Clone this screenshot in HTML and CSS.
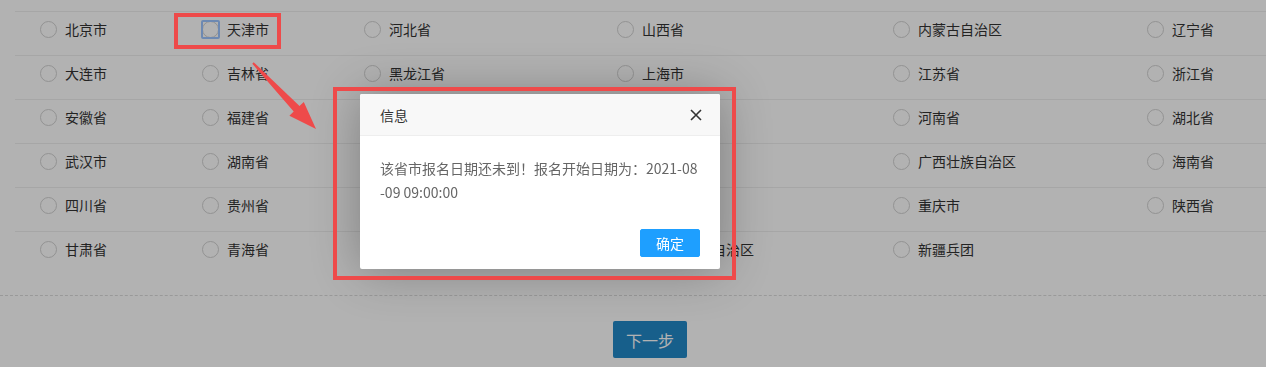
FILE: index.html
```html
<!DOCTYPE html>
<html lang="zh-CN">

<head>
    <meta charset="UTF-8">
    <meta name="viewport" content="width=device-width, initial-scale=1.0">
    <title>选择报名省市</title>
    <link rel="stylesheet" href="styles.css">
</head>

<body>
    <div class="page">
        <div class="area-table">
            <div class="area-row">
                <label class="area-item"><span class="radio"></span>北京市</label>
                <label class="area-item"><span class="radio focused"></span>天津市</label>
                <label class="area-item"><span class="radio"></span>河北省</label>
                <label class="area-item"><span class="radio"></span>山西省</label>
                <label class="area-item"><span class="radio"></span>内蒙古自治区</label>
                <label class="area-item"><span class="radio"></span>辽宁省</label>
            </div>
            <div class="area-row">
                <label class="area-item"><span class="radio"></span>大连市</label>
                <label class="area-item"><span class="radio"></span>吉林省</label>
                <label class="area-item"><span class="radio"></span>黑龙江省</label>
                <label class="area-item"><span class="radio"></span>上海市</label>
                <label class="area-item"><span class="radio"></span>江苏省</label>
                <label class="area-item"><span class="radio"></span>浙江省</label>
            </div>
            <div class="area-row">
                <label class="area-item"><span class="radio"></span>安徽省</label>
                <label class="area-item"><span class="radio"></span>福建省</label>
                <label class="area-item"><span class="radio"></span>江西省</label>
                <label class="area-item"><span class="radio"></span>山东省</label>
                <label class="area-item"><span class="radio"></span>河南省</label>
                <label class="area-item"><span class="radio"></span>湖北省</label>
            </div>
            <div class="area-row">
                <label class="area-item"><span class="radio"></span>武汉市</label>
                <label class="area-item"><span class="radio"></span>湖南省</label>
                <label class="area-item"><span class="radio"></span>广东省</label>
                <label class="area-item"><span class="radio"></span>深圳市</label>
                <label class="area-item"><span class="radio"></span>广西壮族自治区</label>
                <label class="area-item"><span class="radio"></span>海南省</label>
            </div>
            <div class="area-row">
                <label class="area-item"><span class="radio"></span>四川省</label>
                <label class="area-item"><span class="radio"></span>贵州省</label>
                <label class="area-item"><span class="radio"></span>云南省</label>
                <label class="area-item"><span class="radio"></span>西藏自治区</label>
                <label class="area-item"><span class="radio"></span>重庆市</label>
                <label class="area-item"><span class="radio"></span>陕西省</label>
            </div>
            <div class="area-row">
                <label class="area-item"><span class="radio"></span>甘肃省</label>
                <label class="area-item"><span class="radio"></span>青海省</label>
                <label class="area-item"><span class="radio"></span>宁夏回族自治区</label>
                <label class="area-item"><span class="radio"></span>新疆维吾尔自治区</label>
                <label class="area-item"><span class="radio"></span>新疆兵团</label>
            </div>
        </div>

        <div class="divider"></div>

        <div class="footer">
            <button class="btn-next" type="button">下一步</button>
        </div>
    </div>

    <!-- layer shade + dialog -->
    <div class="shade"></div>

    <div class="layer">
        <div class="layer-title">
            <span>信息</span>
            <svg class="layer-close" width="12" height="12" viewBox="0 0 12 12">
                <path d="M1 1L11 11M11 1L1 11" stroke="#333" stroke-width="1.6" fill="none" />
            </svg>
        </div>
        <div class="layer-content">该省市报名日期还未到！报名开始日期为：2021-08-09 09:00:00</div>
        <div class="layer-btn">
            <a class="layer-btn-ok">确定</a>
        </div>
    </div>

    <!-- screenshot annotations -->
    <div class="mark mark-radio"></div>
    <div class="mark mark-dialog"></div>
    <svg class="mark-arrow" width="1266" height="367" viewBox="0 0 1266 367">
        <polygon points="252.3,63.7 253.7,62.3 299.5,106 303.8,101.9 316,129 289.4,115.7 293.7,111.6" fill="#ee4a4a" />
    </svg>
</body>

</html>
```

FILE: styles.css
```css
* {
    box-sizing: border-box;
}

body {
    margin: 0;
    background-color: #fff;
    font-family: "Noto Sans CJK SC", "Liberation Sans", sans-serif;
    font-size: 14px;
    color: #333;
}

.page {
    padding-top: 11px;
}

.area-table {
    margin-left: 15px;
}

.area-row {
    display: grid;
    grid-template-columns: 162px 162px 253px 276px 254px 1fr;
    height: 44px;
    border-top: 1px solid #eee;
}

.area-item {
    display: flex;
    align-items: center;
    gap: 8px;
    height: 18px;
    margin-top: 8px;
    padding-left: 25px;
    line-height: 18px;
    white-space: nowrap;
}

.radio {
    position: relative;
    flex: none;
    width: 17px;
    height: 17px;
    border: 1px solid #d2d2d2;
    border-radius: 50%;
    background: #fff;
}

.radio.focused::after {
    content: "";
    position: absolute;
    inset: -2px;
    border: 2px solid #9cc5ff;
    border-radius: 2px;
}

.divider {
    margin-top: 20px;
    border-top: 1px dashed #dcdcdc;
}

.footer {
    display: flex;
    justify-content: center;
    padding-left: 34px;
    margin-top: 25px;
}

.btn-next {
    width: 74px;
    height: 37px;
    border: none;
    border-radius: 2px;
    background-color: #2188c8;
    color: #fff;
    font-family: inherit;
    font-size: 16px;
}

.shade {
    position: fixed;
    inset: 0;
    background-color: rgba(0, 0, 0, 0.3);
}

.layer {
    position: absolute;
    left: 360px;
    top: 94px;
    width: 360px;
    background-color: #fff;
    border-radius: 2px;
    box-shadow: 1px 1px 50px rgba(0, 0, 0, 0.3);
}

.layer-title {
    display: flex;
    align-items: center;
    justify-content: space-between;
    height: 42px;
    padding: 0 18px 0 20px;
    background-color: #f8f8f8;
    border-bottom: 1px solid #eee;
    border-radius: 2px 2px 0 0;
    color: #333;
}

.layer-close {
    display: block;
}

.layer-content {
    padding: 20px;
    line-height: 24px;
    color: #666;
    word-break: break-all;
}

.layer-btn {
    padding: 0 15px 12px;
    text-align: right;
}

.layer-btn-ok {
    display: inline-block;
    height: 28px;
    line-height: 26px;
    margin: 5px 5px 0;
    padding: 0 15px;
    border: 1px solid #1e9fff;
    border-radius: 2px;
    background-color: #1e9fff;
    color: #fff;
}

.mark {
    position: absolute;
    border: 4px solid #ee4a4a;
}

.mark-radio {
    left: 174px;
    top: 13px;
    width: 107px;
    height: 36px;
}

.mark-dialog {
    left: 333px;
    top: 87px;
    width: 403px;
    height: 193px;
}

.mark-arrow {
    position: absolute;
    left: 0;
    top: 0;
    pointer-events: none;
}
```
